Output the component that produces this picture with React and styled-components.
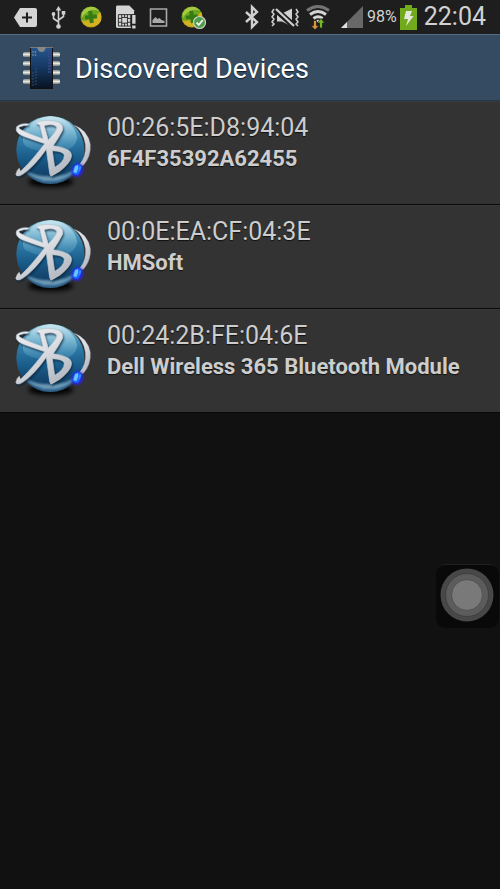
import React from "react";
import styled, { createGlobalStyle } from "styled-components";

const GlobalStyle = createGlobalStyle`
  * { box-sizing: border-box; }
  body { margin: 0; background: #111; font-family: Roboto, sans-serif; }
`;

const Screen = styled.div`
  display: flex;
  flex-direction: column;
  min-height: 100vh;
  background: #111;
`;

const StatusBar = styled.div`
  display: flex;
  justify-content: space-between;
  align-items: center;
  height: 34px;
  padding: 0 14px;
  background: #1e1e1e;
  color: #d2d2d2;
`;

const StatusGroup = styled.div`
  display: flex;
  align-items: center;
  gap: ${(p) => p.$gap}px;
`;

const Glyph = styled.svg`
  display: block;
  flex: none;
  overflow: visible;
`;

const Percent = styled.span`
  font-size: 16px;
  line-height: 34px;
  margin: 0 3px 0 4px;
`;

const Clock = styled.time`
  font-size: 25px;
  line-height: 34px;
  margin-left: 7px;
`;

const Header = styled.header`
  display: flex;
  align-items: center;
  gap: 14px;
  height: 67px;
  padding: 0 22px;
  background: #344b61;
  border-top: 1px solid #526c80;
  border-bottom: 1px solid #20394b;
`;

const Title = styled.h1`
  margin: 0;
  padding-top: 2px;
  color: #fff;
  font-size: 27px;
  font-weight: 400;
  line-height: 36px;
  text-shadow: 0 1px 1px #10202c;
`;

const DeviceList = styled.ul`
  margin: 0;
  padding: 0;
  list-style: none;
`;

const DeviceRow = styled.li`
  display: flex;
  gap: 15px;
  min-height: 104px;
  padding: 9px 12px;
  background: #333;
  border-top: 1px solid #3a3a3a;
  border-bottom: 1px solid #080808;
`;

const DeviceText = styled.div`
  flex: 1;
  min-width: 0;
  padding-top: 1px;
  color: #cdcdcd;
  text-shadow: 0 1px 1px #111;
`;

const Address = styled.div`
  font-size: 25px;
  line-height: 32px;
`;

const Name = styled.div`
  font-size: 22px;
  font-weight: 700;
  line-height: 30px;
`;

const TouchButton = styled.button`
  position: fixed;
  top: 564px;
  right: 1px;
  width: 63px;
  height: 64px;
  padding: 0 2px 3px 0;
  display: flex;
  align-items: center;
  justify-content: center;
  background: #090909;
  border: 0;
  border-top: 1px solid #202020;
  border-radius: 9px;
`;

const TagIcon = () => (
  <Glyph width="23" height="19" viewBox="0 0 23 19">
    <path d="M6 0h15q2 0 2 2v15q0 2-2 2H6L0 9.5Z" fill="#d4d4d4" />
    <path d="M13 4.500v10M8 9.500h10" stroke="#1e1e1e" strokeWidth="2" />
  </Glyph>
);

const UsbIcon = () => (
  <Glyph width="15" height="23" viewBox="0 0 14 23" fill="none" stroke="#d0d0d0" strokeWidth="1.600">
    <path d="M7 3v17M7 16l-5-3.500V8M7 14l5-3.500V7" />
    <path d="M7 0l2.800 4.500H4.200Z" fill="#d0d0d0" stroke="none" />
    <circle cx="2" cy="8" r="1.900" fill="#d0d0d0" stroke="none" />
    <path d="M10.200 5h3.600v3.600h-3.600Z" fill="#d0d0d0" stroke="none" />
    <circle cx="7" cy="20.500" r="2.300" fill="#d0d0d0" stroke="none" />
  </Glyph>
);

const GuardIcon = ({ id, checked }) => (
  <Glyph width={checked ? 24 : 22} height="22" viewBox={checked ? "0 0 24 22" : "0 0 22 22"}>
    <defs>
      <linearGradient id={id} x1="0.200" y1="0" x2="0.700" y2="1">
        <stop offset="0" stopColor="#8ebb28" />
        <stop offset="0.450" stopColor="#65a51c" />
        <stop offset="0.600" stopColor="#c4ad20" />
        <stop offset="1" stopColor="#b48d16" />
      </linearGradient>
    </defs>
    <circle cx="11" cy="11" r="10.500" fill={`url(#${id})`} />
    <path d="M1 14Q7 18 13 14Q18 10 20 6Q24 15 17 19Q7 24 1 14Z" fill="#d4b222" />
    <path d="M2 7Q6 0 14 1Q18 3 19 5Q12 2 7 6Q4 8 2 12Z" fill="#bed353" opacity="0.700" />
    <path d="M9 5h4v4h4v4h-4v4H9v-4H5V9h4Z" fill="#347b13" transform="rotate(-8 11 11)" />
    {checked && (
      <g>
        <circle cx="18.500" cy="16.500" r="6" fill="#4f9d49" stroke="#c5d3c1" strokeWidth="1.200" />
        <path d="M15.500 16.500l2.300 2.300 4-4.800" stroke="#eee" strokeWidth="1.800" fill="none" />
      </g>
    )}
  </Glyph>
);

const SimIcon = () => (
  <Glyph width="20" height="24" viewBox="0 0 21 24">
    <path d="M1.500 0H14l5 5v18.500H1.500Q0 23.500 0 22V1.500Q0 0 1.500 0Z" fill="#d4d4d4" />
    <path d="M2.500 9.500h13v12h-13ZM6 9.500v12M12 9.500v12M2.500 13.500H6M2.500 17.500H6M12 13.500h3.500M12 17.500h3.500M6 12.500h6M6 18.500h6M9 9.500v3M9 18.500v3" fill="none" stroke="#2a2a2a" />
    <path d="M15.500 9h6v15h-6Z" fill="#1e1e1e" />
    <path d="M17 10h3.500v9H17ZM17 21h3.500v3H17Z" fill="#d4d4d4" />
  </Glyph>
);

const PictureIcon = () => (
  <Glyph width="17" height="19" viewBox="0 0 17 19">
    <path d="M0.500 1h16v17h-16Z" fill="none" stroke="#a9a9a9" strokeWidth="1.600" />
    <path d="M2.500 15v-3l3-3 2 2 2-1 2 2 3 1v2Z" fill="#a9a9a9" />
  </Glyph>
);

const BluetoothIcon = () => (
  <Glyph width="14" height="22" viewBox="0 0 14 22">
    <path d="M1 6l11 10-5 5V1l5 5L1 16" fill="none" stroke="#d0d0d0" strokeWidth="2.400" />
  </Glyph>
);

const VibrateIcon = () => (
  <Glyph width="28" height="19" viewBox="0 0 28 19">
    <path d="M6 5.500h5l10-5v18l-10-5H6Z" fill="#d0d0d0" />
    <path d="M4 1l19 17" stroke="#1e1e1e" strokeWidth="6" />
    <path d="M5 1l18 17" stroke="#d0d0d0" strokeWidth="2.200" />
    <path d="M3 1L1 4l2 2-2 3 2 2-2 3 2 2-2 2M25 1l2 3-2 2 2 3-2 2 2 3-2 2 2 2" fill="none" stroke="#d0d0d0" strokeWidth="1.500" />
  </Glyph>
);

const WifiIcon = () => (
  <Glyph width="24" height="25" viewBox="0 0 24 25" fill="none" stroke="#d4d4d4" strokeWidth="3">
    <path d="M1 5.500Q12-2.500 23 5.500" stroke="#747474" />
    <path d="M4 9.500Q12 3.500 20 9.500M7.500 13.500Q12 10 16.500 13.500" />
    <path d="M9.500 15.500Q12 14 14.500 15.500L12 18Z" fill="#d4d4d4" stroke="none" />
    <path d="M7.500 15.500h3v5H13l-4 4.500-4-4.500h2.500Z" fill="#dc943b" stroke="#1e1e1e" strokeWidth="0.800" />
    <path d="M13.500 23h3v-5H19l-4-4.500-4 4.500h2.500Z" fill="#75b922" stroke="#1e1e1e" strokeWidth="0.800" />
  </Glyph>
);

const SignalIcon = () => (
  <Glyph width="22" height="22" viewBox="0 0 22 22">
    <path d="M0 22L22 0v22Z" fill="#686868" />
    <path d="M0 22l6-6v6Z" fill="#e0e0e0" />
  </Glyph>
);

const BatteryIcon = () => (
  <Glyph width="17" height="25" viewBox="0 0 17 25">
    <path d="M5 0h7v3h5v22H0V3h5Z" fill="#73aa1d" />
    <path d="M6 6h6l-2 5h3.500L6 21l2-7H4Z" fill="#e4e8df" />
  </Glyph>
);

const ChipIcon = () => (
  <Glyph width="39" height="44" viewBox="0 0 39 44">
    <defs>
      <linearGradient id="chip-body" x1="0" y1="0" x2="0" y2="1">
        <stop offset="0" stopColor="#24578e" />
        <stop offset="0.450" stopColor="#173a66" />
        <stop offset="1" stopColor="#081321" />
      </linearGradient>
      <linearGradient id="chip-pin" x1="0" y1="0" x2="0" y2="1">
        <stop offset="0" stopColor="#7d8890" />
        <stop offset="0.500" stopColor="#ece9dc" />
        <stop offset="1" stopColor="#707c84" />
      </linearGradient>
    </defs>
    {[6, 15, 24, 33].map((y) => (
      <g key={y} fill="url(#chip-pin)">
        <rect x="1" y={y} width="9" height="5" rx="1.500" />
        <rect x="29" y={y} width="9" height="5" rx="1.500" />
      </g>
    ))}
    <rect x="8.500" y="1.500" width="22" height="41" fill="url(#chip-body)" stroke="#111" />
    <path d="M8 1.500h23" stroke="#777" />
    <path d="M15 1h9q-1 5-4.500 5T15 1Z" fill="#888" />
    <path d="M11 5v6M13.500 5v6" stroke="#71869d" strokeWidth="1.500" strokeDasharray="2 1" opacity="0.800" />
    <path d="M27.500 4v23" stroke="#39488a" strokeWidth="3" strokeDasharray="2 1" opacity="0.700" />
    <path d="M11 26v14M14 22v18" stroke="#47617d" strokeDasharray="2 1" opacity="0.700" />
  </Glyph>
);

const OrbIcon = ({ id }) => (
  <Glyph width="80" height="80" viewBox="36 18 240 240">
    <defs>
      <linearGradient id={`${id}-ball`} x1="0" y1="0" x2="0" y2="1">
        <stop offset="0" stopColor="#8cc3dc" />
        <stop offset="0.350" stopColor="#2e7ca9" />
        <stop offset="0.600" stopColor="#1a5d8b" />
        <stop offset="0.880" stopColor="#123f66" />
        <stop offset="1" stopColor="#2d6089" />
      </linearGradient>
      <linearGradient id={`${id}-shine`} x1="0" y1="0" x2="0" y2="1">
        <stop offset="0" stopColor="#c9e8f2" />
        <stop offset="0.500" stopColor="#7db9d4" stopOpacity="0.800" />
        <stop offset="1" stopColor="#4b95ba" stopOpacity="0.350" />
      </linearGradient>
      <linearGradient id={`${id}-metal`} x1="0" y1="0" x2="0.600" y2="1">
        <stop offset="0" stopColor="#eceef1" />
        <stop offset="0.500" stopColor="#dcdfe4" />
        <stop offset="1" stopColor="#b6bbc4" />
      </linearGradient>
      <filter id={`${id}-soft`} x="-50%" y="-80%" width="200%" height="260%">
        <feGaussianBlur stdDeviation="8" />
      </filter>
      <filter id={`${id}-edge`} x="-30%" y="-30%" width="160%" height="160%">
        <feGaussianBlur stdDeviation="3" />
      </filter>
    </defs>
    <ellipse cx="152" cy="230" rx="68" ry="16" fill="#000" filter={`url(#${id}-soft)`} />
    <circle cx="151" cy="135" r="102" fill={`url(#${id}-ball)`} />
    <path d="M72 194Q105 214 151 214Q203 213 232 188Q208 228 151 229Q98 228 72 194Z" fill="#8dbbd3" opacity="0.700" filter={`url(#${id}-edge)`} />
    <path d="M70 90Q89 40 151 34Q218 38 232 99Q225 132 190 137Q125 150 76 123Q66 115 70 90Z" fill={`url(#${id}-shine)`} />
    <path d="M50 202Q45 207 50 212Q58 215 68 208Q104 184 139 133L149 206L153 214Q185 199 202 178Q225 150 206 136Q187 125 160 122Q177 98 188 76Q191 58 174 51Q150 43 119 49L107 54L119 60L129 101Q90 88 66 76Q49 67 61 65Q68 62 83 61L88 57Q64 53 50 65Q43 83 70 94Q97 104 134 116Q98 164 68 193L61 199L58 190Q51 194 50 202ZM145 105L133 62Q160 55 170 66Q173 75 145 105ZM157 137Q192 139 193 151Q193 171 164 187Z" fill="#0a2438" fillRule="evenodd" opacity="0.850" filter={`url(#${id}-edge)`} transform="translate(3 5)" />
    <path d="M50 202Q45 207 50 212Q58 215 68 208Q104 184 139 133L149 206L153 214Q185 199 202 178Q225 150 206 136Q187 125 160 122Q177 98 188 76Q191 58 174 51Q150 43 119 49L107 54L119 60L129 101Q90 88 66 76Q49 67 61 65Q68 62 83 61L88 57Q64 53 50 65Q43 83 70 94Q97 104 134 116Q98 164 68 193L61 199L58 190Q51 194 50 202ZM145 105L133 62Q160 55 170 66Q173 75 145 105ZM157 137Q192 139 193 151Q193 171 164 187Z" fill={`url(#${id}-metal)`} fillRule="evenodd" stroke="#c3c8d0" strokeWidth="2" />
    <path d="M223 61Q263 75 271 118Q274 155 249 182L239 178Q260 153 256 117Q250 80 223 61Z" fill={`url(#${id}-metal)`} stroke="#a9aeb5" />
    <ellipse cx="232" cy="195" rx="17" ry="21" fill="#2a22ff" filter={`url(#${id}-edge)`} opacity="0.900" transform="rotate(20 232 195)" />
    <path d="M227 179Q237 175 245 184Q244 197 236 208Q225 213 218 203Q217 188 227 179Z" fill="#1a62ff" />
    <path d="M225 184L234 180L235 190L229 205L220 201Z" fill="#67c6ff" />
    <path d="M239 183L244 186L240 196L235 202Z" fill="#3b8bff" />
  </Glyph>
);

const TouchIcon = () => (
  <Glyph width="54" height="54" viewBox="0 0 54 54">
    <circle cx="27" cy="27" r="26.500" fill="#484848" />
    <circle cx="27" cy="27" r="21.500" fill="#5c5c5c" stroke="#404040" />
    <circle cx="27" cy="27" r="15.500" fill="#797979" stroke="#515151" />
  </Glyph>
);

const devices = [
  { address: "00:26:5E:D8:94:04", name: "6F4F35392A62455" },
  { address: "00:0E:EA:CF:04:3E", name: "HMSoft" },
  { address: "00:24:2B:FE:04:6E", name: "Dell Wireless 365 Bluetooth Module" },
];

export default function App() {
  return (
    <Screen>
      <GlobalStyle />
      <StatusBar>
        <StatusGroup $gap={14}>
          <TagIcon />
          <UsbIcon />
          <GuardIcon id="guard-a" />
          <SimIcon />
          <PictureIcon />
          <GuardIcon id="guard-b" checked />
        </StatusGroup>
        <StatusGroup $gap={0}>
          <StatusGroup $gap={7}>
            <StatusGroup $gap={12}>
              <BluetoothIcon />
              <VibrateIcon />
            </StatusGroup>
            <StatusGroup $gap={11}>
              <WifiIcon />
              <SignalIcon />
            </StatusGroup>
          </StatusGroup>
          <Percent>98%</Percent>
          <BatteryIcon />
          <Clock>22:04</Clock>
        </StatusGroup>
      </StatusBar>
      <Header>
        <ChipIcon />
        <Title>Discovered Devices</Title>
      </Header>
      <main>
        <DeviceList>
          {devices.map((device, index) => (
            <DeviceRow key={device.address}>
              <OrbIcon id={`orb-${index}`} />
              <DeviceText>
                <Address>{device.address}</Address>
                <Name>{device.name}</Name>
              </DeviceText>
            </DeviceRow>
          ))}
        </DeviceList>
      </main>
      <TouchButton type="button" aria-label="Assistive touch">
        <TouchIcon />
      </TouchButton>
    </Screen>
  );
}
